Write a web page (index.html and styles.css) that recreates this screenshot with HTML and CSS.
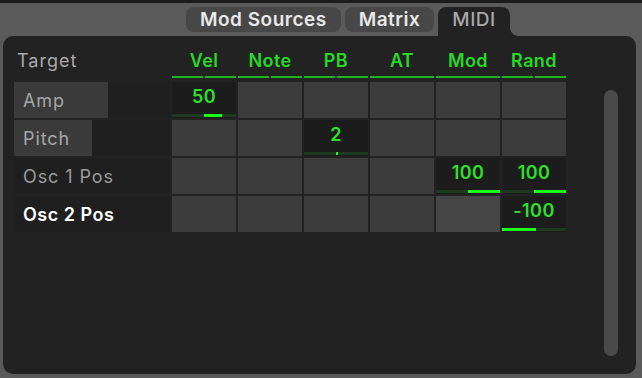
FILE: index.html
```html
<!DOCTYPE html>
<html>
<head>
<meta charset="utf-8">
<link rel="stylesheet" href="styles.css">
</head>
<body>
<div class="topbar"></div>
<div class="tabs">
  <div class="tab">Mod Sources</div>
  <div class="tab">Matrix</div>
  <div class="tab active">MIDI</div>
</div>
<div class="panel">
  <div class="content">
    <div class="grid">
      <div class="hlabel">Target</div>
      <div class="hcol"><span class="hname">Vel</span><div class="uline"><i></i><i></i></div></div>
      <div class="hcol"><span class="hname">Note</span><div class="uline"><i></i><i></i></div></div>
      <div class="hcol"><span class="hname">PB</span><div class="uline"><i></i><i></i></div></div>
      <div class="hcol"><span class="hname">AT</span><div class="uline"><i></i></div></div>
      <div class="hcol"><span class="hname">Mod</span><div class="uline"><i></i></div></div>
      <div class="hcol"><span class="hname">Rand</span><div class="uline"><i></i><i></i></div></div>

      <div class="label"><span class="lbox" style="width:94px">Amp</span></div>
      <div class="cell on"><span class="val">50</span><div class="track"><b style="margin-left:32px;width:18px"></b></div></div>
      <div class="cell"></div>
      <div class="cell"></div>
      <div class="cell"></div>
      <div class="cell"></div>
      <div class="cell"></div>

      <div class="label"><span class="lbox" style="width:78px">Pitch</span></div>
      <div class="cell"></div>
      <div class="cell"></div>
      <div class="cell on"><span class="val">2</span><div class="track"><b style="margin-left:32px;width:2px"></b></div></div>
      <div class="cell"></div>
      <div class="cell"></div>
      <div class="cell"></div>

      <div class="label"><span class="ltext">Osc 1 Pos</span></div>
      <div class="cell"></div>
      <div class="cell"></div>
      <div class="cell"></div>
      <div class="cell"></div>
      <div class="cell on"><span class="val">100</span><div class="track"><b style="margin-left:32px;width:32px"></b></div></div>
      <div class="cell on"><span class="val">100</span><div class="track"><b style="margin-left:32px;width:32px"></b></div></div>

      <div class="label"><span class="ltext sel">Osc 2 Pos</span></div>
      <div class="cell"></div>
      <div class="cell"></div>
      <div class="cell"></div>
      <div class="cell"></div>
      <div class="cell hover"></div>
      <div class="cell on"><span class="val">-100</span><div class="track"><b style="margin-left:0;width:34px"></b></div></div>
    </div>
  </div>
  <div class="scrollbar"></div>
</div>
</body>
</html>
```
FILE: styles.css
```css
html, body {
  margin: 0;
  padding: 0;
}
body {
  width: 642px;
  height: 378px;
  overflow: hidden;
  background: #5a5a5a;
  font-family: Inter, "Noto Sans", sans-serif;
}
.topbar {
  height: 3px;
  background: #1c1c1c;
}
.tabs {
  display: flex;
  align-items: flex-start;
  gap: 4px;
  height: 29px;
  padding-top: 4px;
  margin-left: 186px;
}
.tab {
  height: 25px;
  box-sizing: border-box;
  padding: 1px 14px 0;
  border-radius: 8px;
  background: #474747;
  color: #e8e8e8;
  font-size: 19px;
  font-weight: 600;
  line-height: 23px;
  letter-spacing: 0.5px;
}
.tab.active {
  position: relative;
  height: 29px;
  border-radius: 8px 8px 0 0;
  background: #222222;
  color: #a8a8a8;
  font-weight: 500;
}
.tab.active::after {
  content: "";
  position: absolute;
  right: -8px;
  bottom: 0;
  width: 8px;
  height: 8px;
  background: radial-gradient(circle at 100% 0, transparent 7.5px, #222222 8px);
}
.panel {
  display: flex;
  width: 633px;
  height: 338px;
  margin-left: 3px;
  background: #222222;
  border-radius: 10px;
}
.content {
  flex: 1;
  padding: 14px 0 0 11px;
}
.grid {
  display: grid;
  grid-template-columns: 156px repeat(6, 64px);
  grid-template-rows: 30px repeat(4, 36px);
  column-gap: 2px;
  row-gap: 2px;
}
.hlabel {
  padding-left: 3px;
  color: #a9a9a9;
  font-size: 18px;
  line-height: 22px;
  letter-spacing: 1px;
}
.hcol {
  display: flex;
  flex-direction: column;
  align-items: stretch;
  margin-bottom: 2px;
}
.hname {
  flex: 1;
  text-align: center;
  color: #27d827;
  font-size: 18px;
  font-weight: 600;
  line-height: 22px;
  letter-spacing: 0.4px;
}
.uline {
  display: flex;
  gap: 2px;
  height: 2px;
}
.uline i {
  flex: 1;
  background: #1fb41f;
}
.label {
  display: flex;
  align-items: stretch;
  background: #1f1f1f;
}
.lbox, .ltext {
  display: flex;
  align-items: center;
  box-sizing: border-box;
  padding-left: 9px;
  color: #a6a6a6;
  font-size: 18px;
  letter-spacing: 0.9px;
}
.lbox {
  background: #3a3a3a;
}
.ltext {
  color: #9a9a9a;
}
.ltext.sel {
  color: #ffffff;
  font-weight: 600;
  letter-spacing: 0.5px;
}
.cell {
  display: flex;
  flex-direction: column;
  background: #3c3c3c;
}
.cell.hover {
  background: #454545;
}
.cell.on {
  background: #1c1c1c;
}
.val {
  flex: 1;
  padding-top: 4px;
  text-align: center;
  color: #2ee02e;
  font-size: 18px;
  font-weight: 600;
  line-height: 22px;
  letter-spacing: 0.4px;
}
.track {
  display: flex;
  height: 3px;
  margin-bottom: 1px;
  background: #1e3a1e;
}
.track b {
  display: block;
  height: 3px;
  background: #19ff19;
}
.scrollbar {
  width: 14px;
  height: 266px;
  margin: 54px 18px 0 0;
  border-radius: 7px;
  background: #4a4a4a;
}
```
